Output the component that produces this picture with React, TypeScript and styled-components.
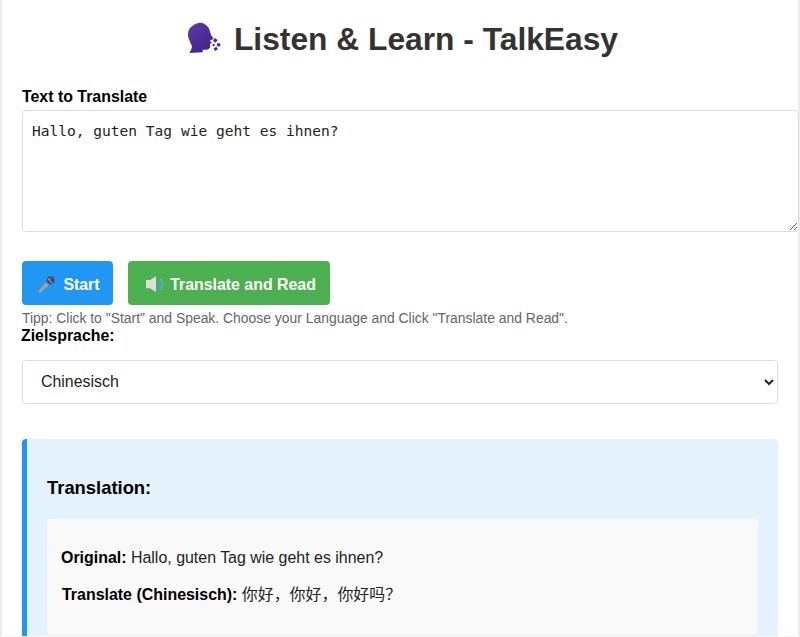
import React from "react";
import styled, { createGlobalStyle } from "styled-components";

const GlobalStyle = createGlobalStyle`
  html, body {
    margin: 0;
    padding: 0;
    height: 637px;
    overflow: hidden;
    background: #f4f9f2;
    font-family: "Liberation Sans", Arial, sans-serif;
  }
`;

const Frame = styled.div`
  height: 636px;
  padding: 0 2px;
  background: #ececec;
  overflow: hidden;
`;

const Page = styled.div`
  box-sizing: border-box;
  height: 636px;
  padding: 0 20px;
  background: #fff;
`;

const Title = styled.h1`
  display: flex;
  justify-content: center;
  align-items: center;
  gap: 7px;
  height: 78px;
  margin: 0;
  font-size: 31.75px;
  font-weight: 700;
  color: #333;
`;

const FieldLabel = styled.label`
  display: block;
  font-size: 15.9px;
  font-weight: 700;
  line-height: 18px;
  color: #000;
`;

const TextLabel = styled(FieldLabel)`
  margin-top: 10px;
  margin-bottom: 4px;
`;

const TargetLabel = styled(FieldLabel)`
  margin-top: 1px;
  margin-left: -1px;
  margin-bottom: 15px;
`;

const TextInput = styled.textarea`
  display: block;
  box-sizing: border-box;
  width: calc(100% + 21px);
  height: 122px;
  margin: 0;
  padding: 10px 9px;
  border: 1px solid #ddd;
  border-radius: 4px;
  outline: none;
  background: #fff;
  color: #222;
  font-family: "DejaVu Sans Mono", monospace;
  font-size: 14.55px;
  line-height: 20px;
`;

const ButtonRow = styled.div`
  display: flex;
  gap: 15px;
  margin-top: 29px;
`;

const ActionButton = styled.button<{ $tone: string; $width: number }>`
  display: flex;
  align-items: center;
  justify-content: center;
  box-sizing: border-box;
  width: ${(p) => p.$width}px;
  height: 44px;
  padding: 0;
  border: none;
  border-radius: 4px;
  background: ${(p) => p.$tone};
  color: #fff;
  font-family: inherit;
  font-size: 15.9px;
  font-weight: 700;
`;

const ButtonText = styled.span`
  margin-top: 3px;
  margin-left: -2px;
`;

const Hint = styled.p`
  margin: 5px 0 0;
  font-size: 13.92px;
  line-height: 16px;
  color: #666;
`;

const LanguageSelect = styled.select`
  display: block;
  box-sizing: border-box;
  width: 100%;
  height: 44px;
  padding: 0 14px 2px;
  border: 1px solid #ddd;
  border-radius: 4px;
  background: #fff;
  color: #222;
  font-family: inherit;
  font-size: 15.9px;
`;

const ResultPanel = styled.section`
  box-sizing: border-box;
  height: 197px;
  margin-top: 35px;
  padding: 38px 20px 0;
  border-left: 5px solid #2196f3;
  border-radius: 4px 4px 0 0;
  background: #e3f2fd;
`;

const ResultTitle = styled.h3`
  margin: 0 0 20px;
  font-size: 18.4px;
  line-height: 22px;
  font-weight: 700;
  color: #000;
`;

const ResultBox = styled.div`
  box-sizing: border-box;
  height: 116px;
  padding: 30px 14px 0;
  border-radius: 4px;
  background: #f9f9f9;
`;

const ResultLine = styled.p`
  margin: 0 0 19px;
  font-size: 15.95px;
  line-height: 18px;
  color: #222;
  font-family: "Liberation Sans", "Noto Sans CJK SC", sans-serif;
  strong { color: #000; }
`;

const TranslatedLine = styled(ResultLine)`
  margin-left: 1px;
`;

const SpeakingHead = () => (
  <svg width="45" height="42" viewBox="0 0 135 126">
    <defs>
      <linearGradient id="head" x1="0" y1="0" x2="0.6" y2="1">
        <stop offset="0" stopColor="#5f3ba6" />
        <stop offset="1" stopColor="#452389" />
      </linearGradient>
    </defs>
    <path
      fill="url(#head)"
      d="M18 50C18 38 23 30 30 25C38 18 46 14 55 14C66 14 75 22 80 30C84 38 85 44 87 50L95 63L85 67L83 72L85 85C84 92 78 96 70 95L62 95L62 103L22 105C27 97 30 91 30 85C27 79 25 75 24 70C20 63 18 57 18 50Z"
    />
    <g fill="#4a2a94">
      <rect x="95" y="62" width="10" height="10" transform="rotate(40 100 67)" />
      <rect x="81" y="70" width="7" height="7" />
      <rect x="105" y="76" width="10" height="9" />
      <rect x="92" y="78" width="6" height="6" />
      <rect x="96" y="88" width="10" height="9" transform="rotate(-30 101 92)" />
    </g>
  </svg>
);

const MicIcon = () => (
  <svg width="30" height="26" viewBox="3 0 90 78">
    <path d="M13 63L36 37L44 45L19 69Z" fill="#a8a096" />
    <circle cx="50" cy="31" r="12" fill="#4b4566" />
    <path d="M41 26L55 40" stroke="#b9b6c4" strokeWidth="3" />
    <circle cx="48" cy="26" r="3" fill="#8f8aa8" />
  </svg>
);

const SpeakerIcon = () => (
  <svg width="30" height="26" viewBox="8 0 90 78">
    <path d="M20 30H32L50 19V66L32 55H20Z" fill="#d9dfd8" />
    <path d="M56 25C64 34 64 52 56 61" fill="none" stroke="#4a9ecf" strokeWidth="5" />
    <path d="M64 26C71 36 71 50 64 60" fill="none" stroke="#6fb4cf" strokeWidth="5" strokeDasharray="5 3" />
  </svg>
);

const App: React.FC = () => {
  return (
    <Frame>
      <GlobalStyle />
      <Page>
        <Title>
          <SpeakingHead />
          Listen &amp; Learn - TalkEasy
        </Title>
        <TextLabel>Text to Translate</TextLabel>
        <TextInput defaultValue="Hallo, guten Tag wie geht es ihnen?" />
        <ButtonRow>
          <ActionButton $tone="#2196f3" $width={91}>
            <MicIcon />
            <ButtonText>Start</ButtonText>
          </ActionButton>
          <ActionButton $tone="#4caf50" $width={202}>
            <SpeakerIcon />
            <ButtonText>Translate and Read</ButtonText>
          </ActionButton>
        </ButtonRow>
        <Hint>Tipp: Click to "Start" and Speak. Choose your Language and Click "Translate and Read".</Hint>
        <TargetLabel>Zielsprache:</TargetLabel>
        <LanguageSelect defaultValue="zh">
          <option value="zh">Chinesisch</option>
        </LanguageSelect>
        <ResultPanel>
          <ResultTitle>Translation:</ResultTitle>
          <ResultBox>
            <ResultLine>
              <strong>Original:</strong> Hallo, guten Tag wie geht es ihnen?
            </ResultLine>
            <TranslatedLine>
              <strong>Translate (Chinesisch):</strong> {"\u4F60\u597D\uFF0C\u4F60\u597D\uFF0C\u4F60\u597D\u5417\uFF1F"}
            </TranslatedLine>
          </ResultBox>
        </ResultPanel>
      </Page>
    </Frame>
  );
};

export default App;
